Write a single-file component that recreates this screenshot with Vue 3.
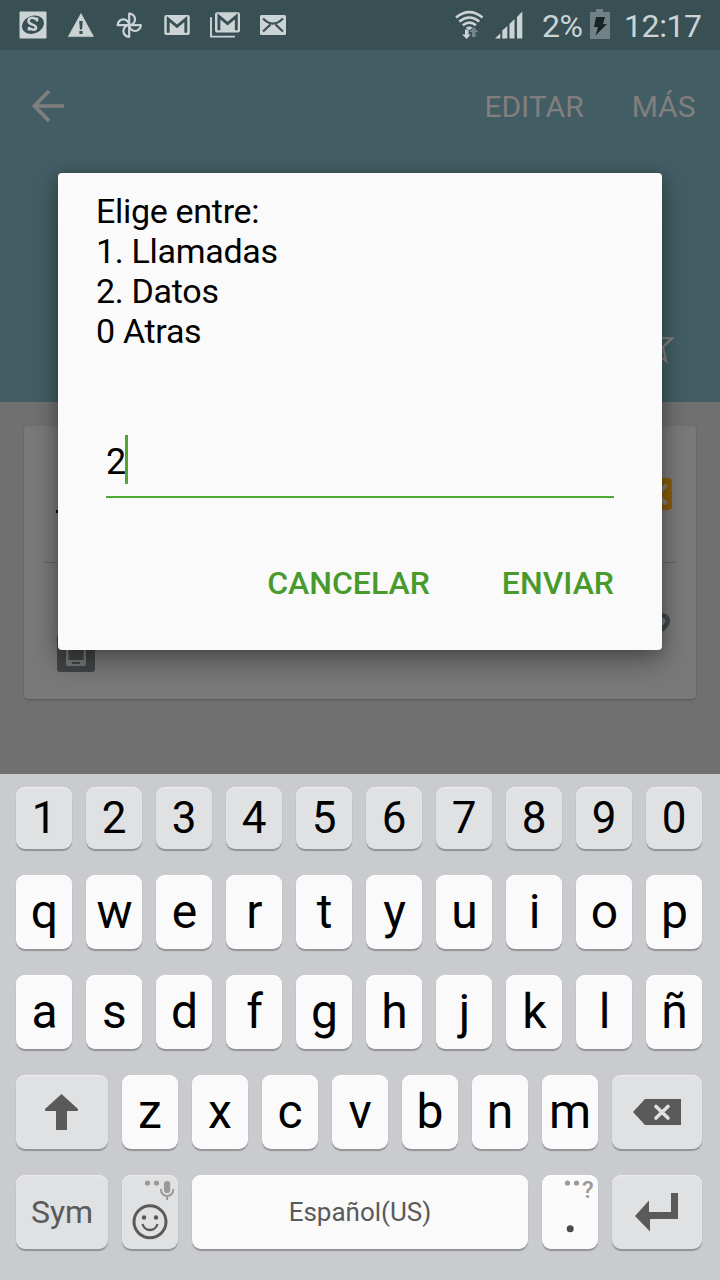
<script setup>
const digits = [...'1234567890']
const letterRows = [[...'qwertyuiop'], [...'asdfghjklñ']]
const bottomLetters = [...'zxcvbnm']
const messageLines = ['Elige entre:', '1. Llamadas', '2. Datos', '0 Atras']
</script>

<template>
  <div class="screen">
    <header class="status">
      <svg class="status-icons" width="300" height="50" viewBox="0 0 300 50">
        <rect x="19.500" y="11.500" width="27" height="27" rx="1" fill="#ccd3d5" />
        <ellipse cx="33" cy="24.700" rx="11.300" ry="8.800" fill="#385054" transform="rotate(-22 33 24.700)" />
        <path d="M37 21.500V18.800h-1.500c-4-2-7-.5-7 2.200 0 4.300 7.500 3 7.500 6.500 0 3-5 3-7 0M29 27v3.500" fill="none" stroke="#ccd3d5" stroke-width="2.500" />
        <path d="M81 13.500 93.500 36.600H68.300Z" fill="#ccd3d5" stroke="#ccd3d5" stroke-width=".6" stroke-linejoin="round" />
        <path d="M79.200 21h3.600l-.7 8.500h-2.200zM79.400 31h3.200v3h-3.200z" fill="#385054" />
        <g fill="none" stroke="#ccd3d5" stroke-width="2.200" stroke-linejoin="round">
          <path d="M129.200 25.200V13.600a5.800 5.800 0 0 1 0 11.600" />
          <path d="M129.200 25.200h11.600a5.800 5.800 0 0 1-11.600 0" />
          <path d="M129.200 25.200v11.600a5.800 5.800 0 0 1 0-11.600" />
          <path d="M129.200 25.200h-11.600a5.800 5.800 0 0 1 11.600 0" />
        </g>
        <rect x="164.300" y="15" width="25.500" height="20" rx="2" fill="#ccd3d5" />
        <path d="M168.200 32.800V19l8.800 7.300 8.800-7.300V32.800" fill="none" stroke="#385054" stroke-width="2.900" />
        <rect x="215" y="12.300" width="25" height="20.200" rx="2" fill="#ccd3d5" />
        <path d="M218.900 30.200V16.300l8.700 7.300 8.700-7.300V30.200" fill="none" stroke="#385054" stroke-width="2.900" />
        <path d="M211 17.300V36.600H235" fill="none" stroke="#ccd3d5" stroke-width="1.900" />
        <rect x="260" y="15" width="26" height="20" rx="1.500" fill="#ccd3d5" />
        <path d="M263 18.500c7 7 13 7 20 0M263 31.500l7.500-7M283 31.500l-7.500-7" fill="none" stroke="#385054" stroke-width="2.300" />
      </svg>
      <svg class="signal-icons" width="76" height="50" viewBox="450 0 76 50">
        <g fill="none" stroke="#ccd3d5" stroke-width="2.600">
          <path d="M456 17.500Q469.500 6.800 482.500 17.500" />
          <path d="M459.300 21.500Q469.500 13.500 479.300 21.500" />
          <path d="M462.800 25.200Q469.500 20 475.900 25.200" />
        </g>
        <path d="M465.700 27.700q3.600-2.500 7 0l-3.500 2.500z" fill="#ccd3d5" />
        <path d="M465 29.500h3.500v5h2.200L466.700 39l-4.700-4.500h3z" fill="#ccd3d5" />
        <path d="M472 37h3.600v-5h2.600l-4.400-5-4.400 5h2.600z" fill="#75868a" />
        <path d="M495 38.500 500.300 33.500v5zM502.300 30.500l5-4.500v12.500h-5zM509.500 24l5-5v19.500h-5zM517 17l5.300-5.500v27H517z" fill="#ccd3d5" />
      </svg>
      <span class="percent">2%</span>
      <svg class="battery" width="20" height="30" viewBox="0 0 20 30">
        <path d="M0 3h6V0h7v3h7v27H0z" fill="#708286" />
        <path d="M6 8h9l-2 7h4L5.500 26.500 8 18H4z" fill="#182426" />
      </svg>
      <span class="clock">12:17</span>
    </header>

    <div class="appbar">
      <svg class="back" width="34" height="34" viewBox="0 0 34 34">
        <path d="M18 2 3.500 17 18 32M4 17H33" fill="none" stroke="#827e7e" stroke-width="3.700" />
      </svg>
      <span class="edit">EDITAR</span>
      <span class="more">MÁS</span>
    </div>
    <div class="profile">
      <svg class="star" width="44" height="44" viewBox="0 0 44 44">
        <path d="M22 3 27 14.600 39 15.400 30.100 24 33 37.800 22 30.500 11 37.800 13.900 24 5 15.400 17 14.600Z" fill="none" stroke="#827e7e" stroke-width="2.400" />
      </svg>
    </div>

    <main class="content">
      <section class="card">
        <div class="card-row top-row">
          <i class="name-edge"></i>
          <svg class="sim" width="32" height="32" viewBox="0 0 32 32">
            <rect width="32" height="32" rx="3.500" fill="#885b0b" />
            <path d="m26.500 7-9.500 9.500 9.500 9.500" fill="none" stroke="#827e77" stroke-width="4" />
          </svg>
        </div>
        <div class="card-row bottom-row">
          <svg class="phone" width="38" height="70" viewBox="0 0 38 70">
            <path d="M1 6h5" stroke="#505050" stroke-width="8" />
            <rect y="32" width="38" height="38" rx="3" fill="#414446" />
            <rect x="9" y="39" width="20" height="25" rx="2" fill="#777" />
            <rect x="11.500" y="42" width="15" height="16" fill="#414446" />
            <path d="M15 61h8" stroke="#414446" stroke-width="2" />
          </svg>
          <svg class="call" width="22" height="24" viewBox="0 0 22 24">
            <path d="M2 20C5 5 12 2 17 4c5 3 3 9-4 14" fill="none" stroke="#40494c" stroke-width="4.500" />
          </svg>
        </div>
      </section>
    </main>

    <section class="keyboard">
      <div class="keys digits">
        <span v-for="d in digits" :key="d" class="key gray">{{ d }}</span>
      </div>
      <div v-for="(row, i) in letterRows" :key="i" class="keys letters">
        <span v-for="c in row" :key="c" class="key">{{ c }}</span>
      </div>
      <div class="keys third">
        <span class="key gray">
          <svg width="92" height="74" viewBox="0 0 92 74"><path d="M45.500 19 62 34q.5 2-1 2H51v19H40V36H30q-1.500 0-1-2Z" fill="#5a5a5a" /></svg>
        </span>
        <span v-for="c in bottomLetters" :key="c" class="key">{{ c }}</span>
        <span class="key gray">
          <svg width="90" height="74" viewBox="0 0 90 74">
            <path d="M21 37 33 24H69V50H33Z" fill="#5a5a5a" />
            <path d="m44 31.500 12 11.500M56 31.500 44 43" stroke="#e0e1e3" stroke-width="3.600" stroke-linecap="round" />
          </svg>
        </span>
      </div>
      <div class="keys fourth">
        <span class="key gray sym">Sym</span>
        <span class="key gray">
          <svg width="56" height="74" viewBox="0 0 56 74">
            <g fill="#999"><circle cx="25.500" cy="8" r="2.600" /><circle cx="34.500" cy="8" r="2.600" /><rect x="42" y="6" width="6.200" height="12" rx="3.100" /></g>
            <path d="M39 14v1a6.100 6.100 0 0 0 12.200 0v-1M45.100 21v4" fill="none" stroke="#999" stroke-width="2" />
            <circle cx="28" cy="46.800" r="16" fill="none" stroke="#5a5a5a" stroke-width="3" />
            <circle cx="22" cy="42.500" r="2.200" fill="#5a5a5a" /><circle cx="34" cy="42.500" r="2.200" fill="#5a5a5a" />
            <path d="M20.500 49c2.500 8 12.500 8 15 0" fill="none" stroke="#5a5a5a" stroke-width="2.300" />
          </svg>
        </span>
        <span class="key space">Español(US)</span>
        <span class="key period">
          <svg width="56" height="74" viewBox="0 0 56 74">
            <g fill="#999"><circle cx="25.500" cy="8" r="2.600" /><circle cx="34.500" cy="8" r="2.600" /></g>
            <circle cx="28.200" cy="53.800" r="3.500" fill="#4a4a4a" />
          </svg>
          <b class="hint">?</b>
        </span>
        <span class="key gray">
          <svg width="90" height="74" viewBox="0 0 90 74"><path d="M23 41 37 25.500V37H59V18h7V44H38V56.500Z" fill="#5a5a5a" /></svg>
        </span>
      </div>
    </section>

    <section class="dialog">
      <div class="message"><div v-for="l in messageLines" :key="l">{{ l }}</div></div>
      <div class="field"><span>2</span><i class="caret"></i></div>
      <div class="actions"><span>CANCELAR</span><span>ENVIAR</span></div>
    </section>
  </div>
</template>

<style>
body { margin: 0; }
</style>

<style scoped>
.screen {
  position: relative;
  width: 720px;
  height: 1280px;
  overflow: hidden;
  display: flex;
  flex-direction: column;
  background: #707070;
  font-family: Roboto, "Liberation Sans", sans-serif;
}
svg { display: block; flex: none; }
.status {
  height: 50px;
  flex: none;
  display: flex;
  background: #385054;
  color: #ccd3d5;
  font-size: 32px;
  line-height: 52px;
  white-space: nowrap;
}
.signal-icons { margin-left: 150px; }
.percent { width: 48px; margin-left: 16px; letter-spacing: -.4px; }
.battery { margin: 9px 0 0; }
.clock { margin-left: 14px; letter-spacing: -.4px; }
.appbar {
  height: 112px;
  flex: none;
  display: flex;
  background: #425e64;
  color: #827e7e;
  font-size: 30px;
  line-height: 113px;
  padding: 0 24.500px 0 31px;
}
.back { margin-top: 39px; }
.edit { margin-left: auto; }
.more { margin-left: 48px; }
.profile { height: 240px; flex: none; background: #425e64; display: flex; }
.star { margin: 161px 43px 0 auto; }
.content { height: 372px; flex: none; padding: 24px 24px 0; box-sizing: border-box; background: #707070; }
.card {
  height: 273px;
  border-radius: 4px;
  background: #797979;
  box-shadow: 0 1px 2px #555;
}
.card-row { display: flex; justify-content: space-between; margin: 0 20px; }
.top-row { height: 136px; border-bottom: 1px solid #646464; }
.name-edge { width: 8px; height: 3px; margin: 84px 0 0 12px; background: #080808; }
.sim { margin: 52px 4px 0 0; }
.phone { margin: 39px 0 0 13px; }
.call { margin: 49px 6px 0 0; }
.dialog {
  position: absolute;
  left: 58px;
  top: 173px;
  width: 604px;
  height: 477px;
  box-sizing: border-box;
  padding: 18px 48px 0;
  border-radius: 4px;
  background: #fafafa;
  box-shadow: 0 12px 28px rgba(0, 0, 0, .32), 0 1px 14px rgba(0, 0, 0, .2);
  color: #000;
}
.message { margin-left: -10px; height: 244px; font-size: 34px; line-height: 40px; letter-spacing: -.3px; }
.field {
  display: flex;
  height: 61px;
  border-bottom: 2px solid #4fa833;
  font-size: 36px;
  line-height: 54px;
}
.field span { width: 19px; }
.caret { width: 3px; height: 49px; background: #4fa833; }
.actions {
  display: flex;
  justify-content: flex-end;
  gap: 72px;
  margin-top: 65px;
  color: #489a2d;
  font-size: 32px;
  font-weight: 500;
  line-height: 40px;
}
.keyboard {
  height: 506px;
  flex: none;
  box-sizing: border-box;
  padding: 13px 18px 0 16px;
  background: #cacbcf;
  display: flex;
  flex-direction: column;
  gap: 26px;
}
.keys {
  display: grid;
  grid-template-columns: repeat(10, 56px);
  gap: 14px;
  height: 74px;
  flex: none;
  font-size: 48px;
  line-height: 74px;
}
.letters { text-indent: 1px; }
.digits { height: 62px; font-size: 44px; line-height: 62px; }
.third { grid-template-columns: 92px repeat(7, 56px) 90px; }
.fourth { grid-template-columns: 92px 56px 336px 56px 90px; }
.key {
  position: relative;
  border-radius: 9px;
  background: #fafafa;
  box-shadow: 0 2px 1px #929397, inset 0 1px 1px #fff;
  text-align: center;
  color: #000;
}
.gray { background: #e0e1e3; box-shadow: 0 2px 1px #929397, inset 0 1px 1px #eeeeef; }
.sym { font-size: 32px; color: #5a5a5a; }
.space { font-size: 26px; color: #5a5a5a; }
.hint {
  position: absolute;
  left: 40px;
  top: 2px;
  font-size: 24px;
  font-weight: 500;
  line-height: 26px;
  color: #999;
}
</style>
